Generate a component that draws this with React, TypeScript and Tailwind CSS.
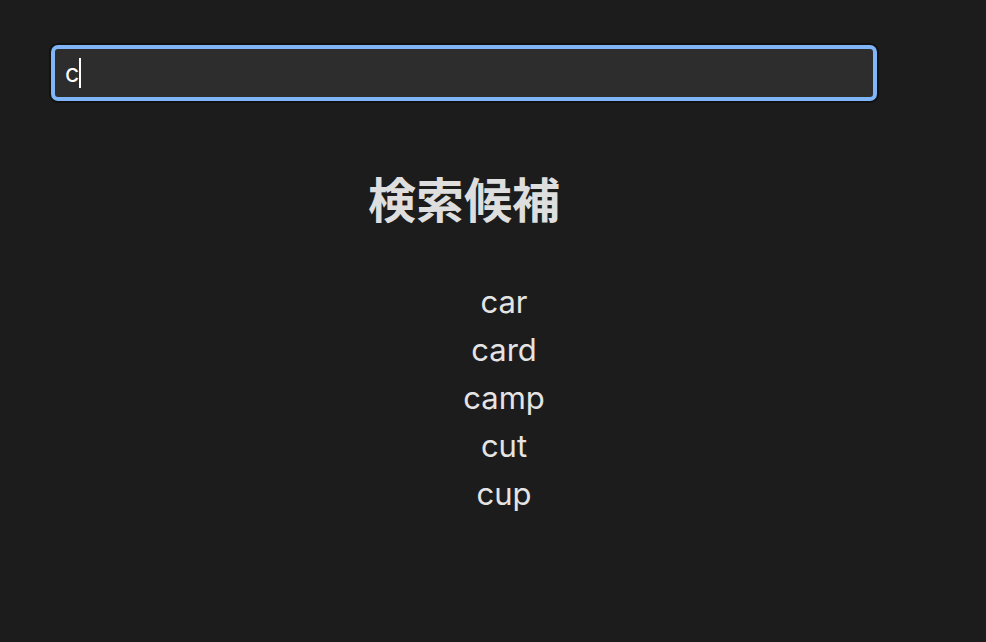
import React from "react";

export default function App() {
  const items = ["car", "card", "camp", "cut", "cup"];
  return (
    <div
      className="min-h-screen w-full bg-[#1c1c1c] text-[#e2e2e2]"
      style={{ fontFamily: "Inter, 'Noto Sans CJK JP', sans-serif" }}
    >
      <div className="w-[824px] ml-[52px] pt-[46px]">
        <div className="h-[54px] w-full rounded-[6px] border-[3px] border-[#80b6f8] bg-[#2d2d2d] shadow-[0_0_0_1px_#7fb5f6,0_0_0_3px_#111111] flex items-center pl-[10px]">
          <span className="text-[25px] leading-none text-white">c</span>
          <span className="w-[2px] h-[30px] bg-white" />
        </div>
        <h1
          className="mt-[73px] text-center text-[48px] leading-[48px] font-bold text-[#dedede]"
          style={{ fontFamily: "'Noto Sans CJK JP', sans-serif" }}
        >
          検索候補
        </h1>
        <ul className="mt-[57px] pl-20 text-center text-[31px] leading-[48px] text-[#e4e4e4]">
          {items.map((w) => (
            <li key={w}>{w}</li>
          ))}
        </ul>
      </div>
    </div>
  );
}
